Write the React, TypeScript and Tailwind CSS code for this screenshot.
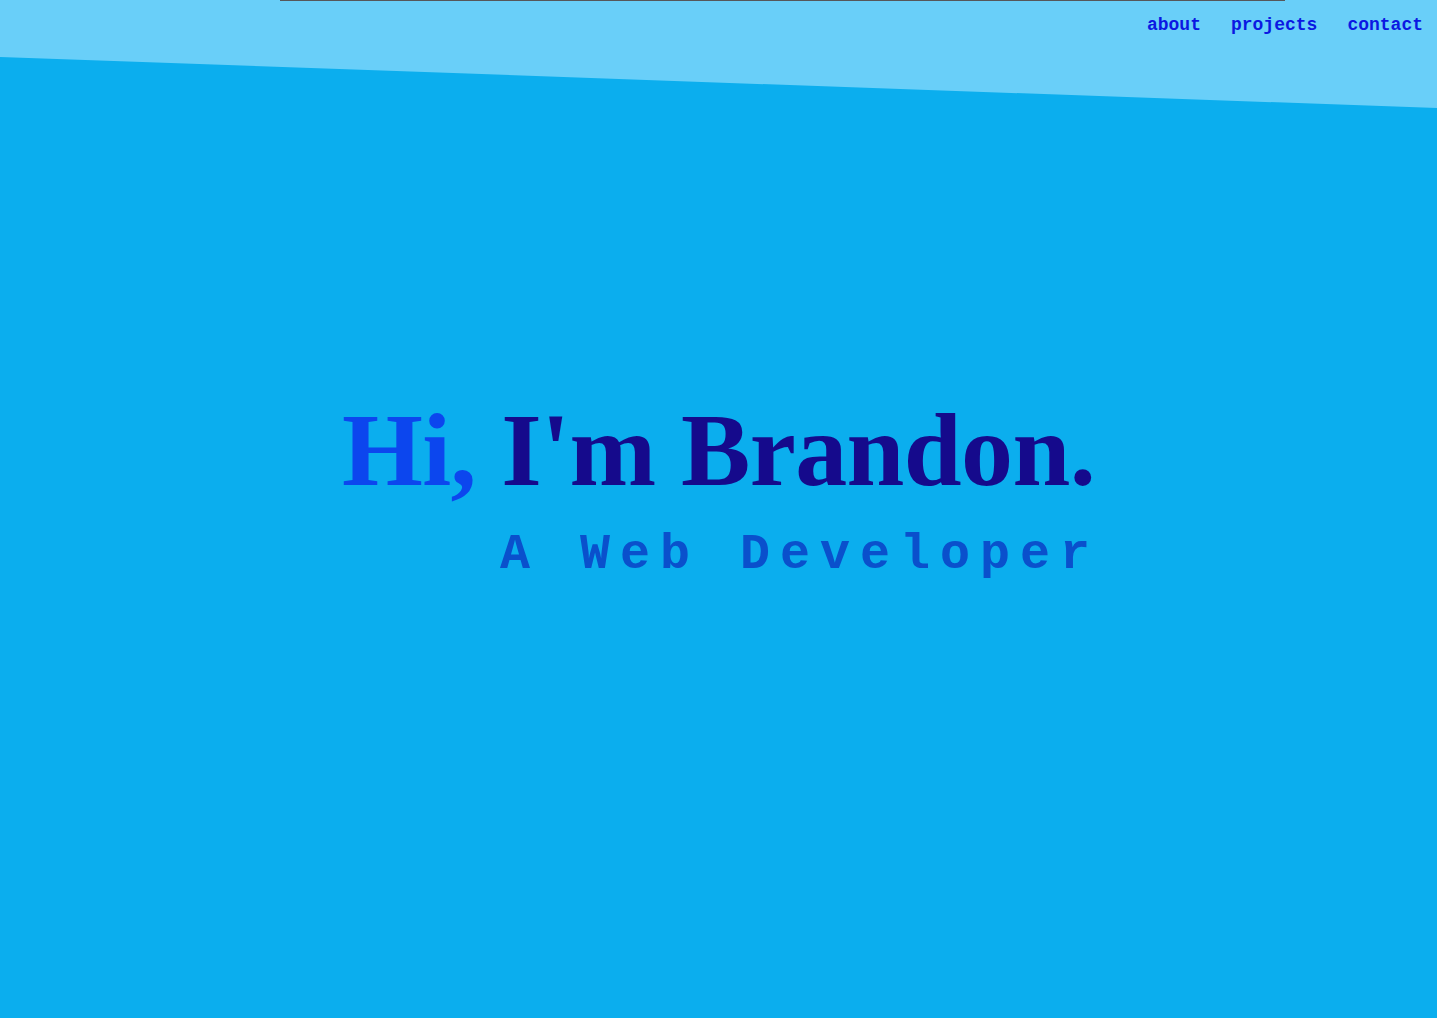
const navLinks = ["about", "projects", "contact"];

const App = () => {
  return (
    <div className="relative w-full h-screen overflow-hidden bg-[#0baeee]">
      {/* slanted light band behind the nav */}
      <div className="absolute top-0 left-0 w-full h-[108px] bg-[#69cff9] [clip-path:polygon(0_0,100%_0,100%_100%,0_52.8%)]"></div>
      <div className="absolute top-0 left-[280px] w-[1005px] h-px bg-[#56575a]"></div>

      <nav className="relative flex justify-end gap-[30px] pt-4 pr-[14px] font-['Liberation_Mono',monospace] text-[18px] leading-none font-bold text-[#0b18e2]">
        {navLinks.map((link) => (
          <a key={link} href="#">
            {link}
          </a>
        ))}
      </nav>

      <main className="absolute inset-0 flex items-center justify-center pb-[40px]">
        <div className="flex flex-col items-end">
          <h1 className="font-['Liberation_Serif',serif] font-bold text-[104px] leading-none tracking-[-0.6px] text-[#150a8c]">
            <span className="text-[#0c46ee]">Hi,</span> I'm Brandon.
          </h1>
          <p className="mt-[28px] mr-[-5px] font-['Liberation_Mono',monospace] font-bold text-[50px] leading-none tracking-[10px] text-[#0a50cc]">
            A Web Developer
          </p>
        </div>
      </main>
    </div>
  );
};

export default App;
